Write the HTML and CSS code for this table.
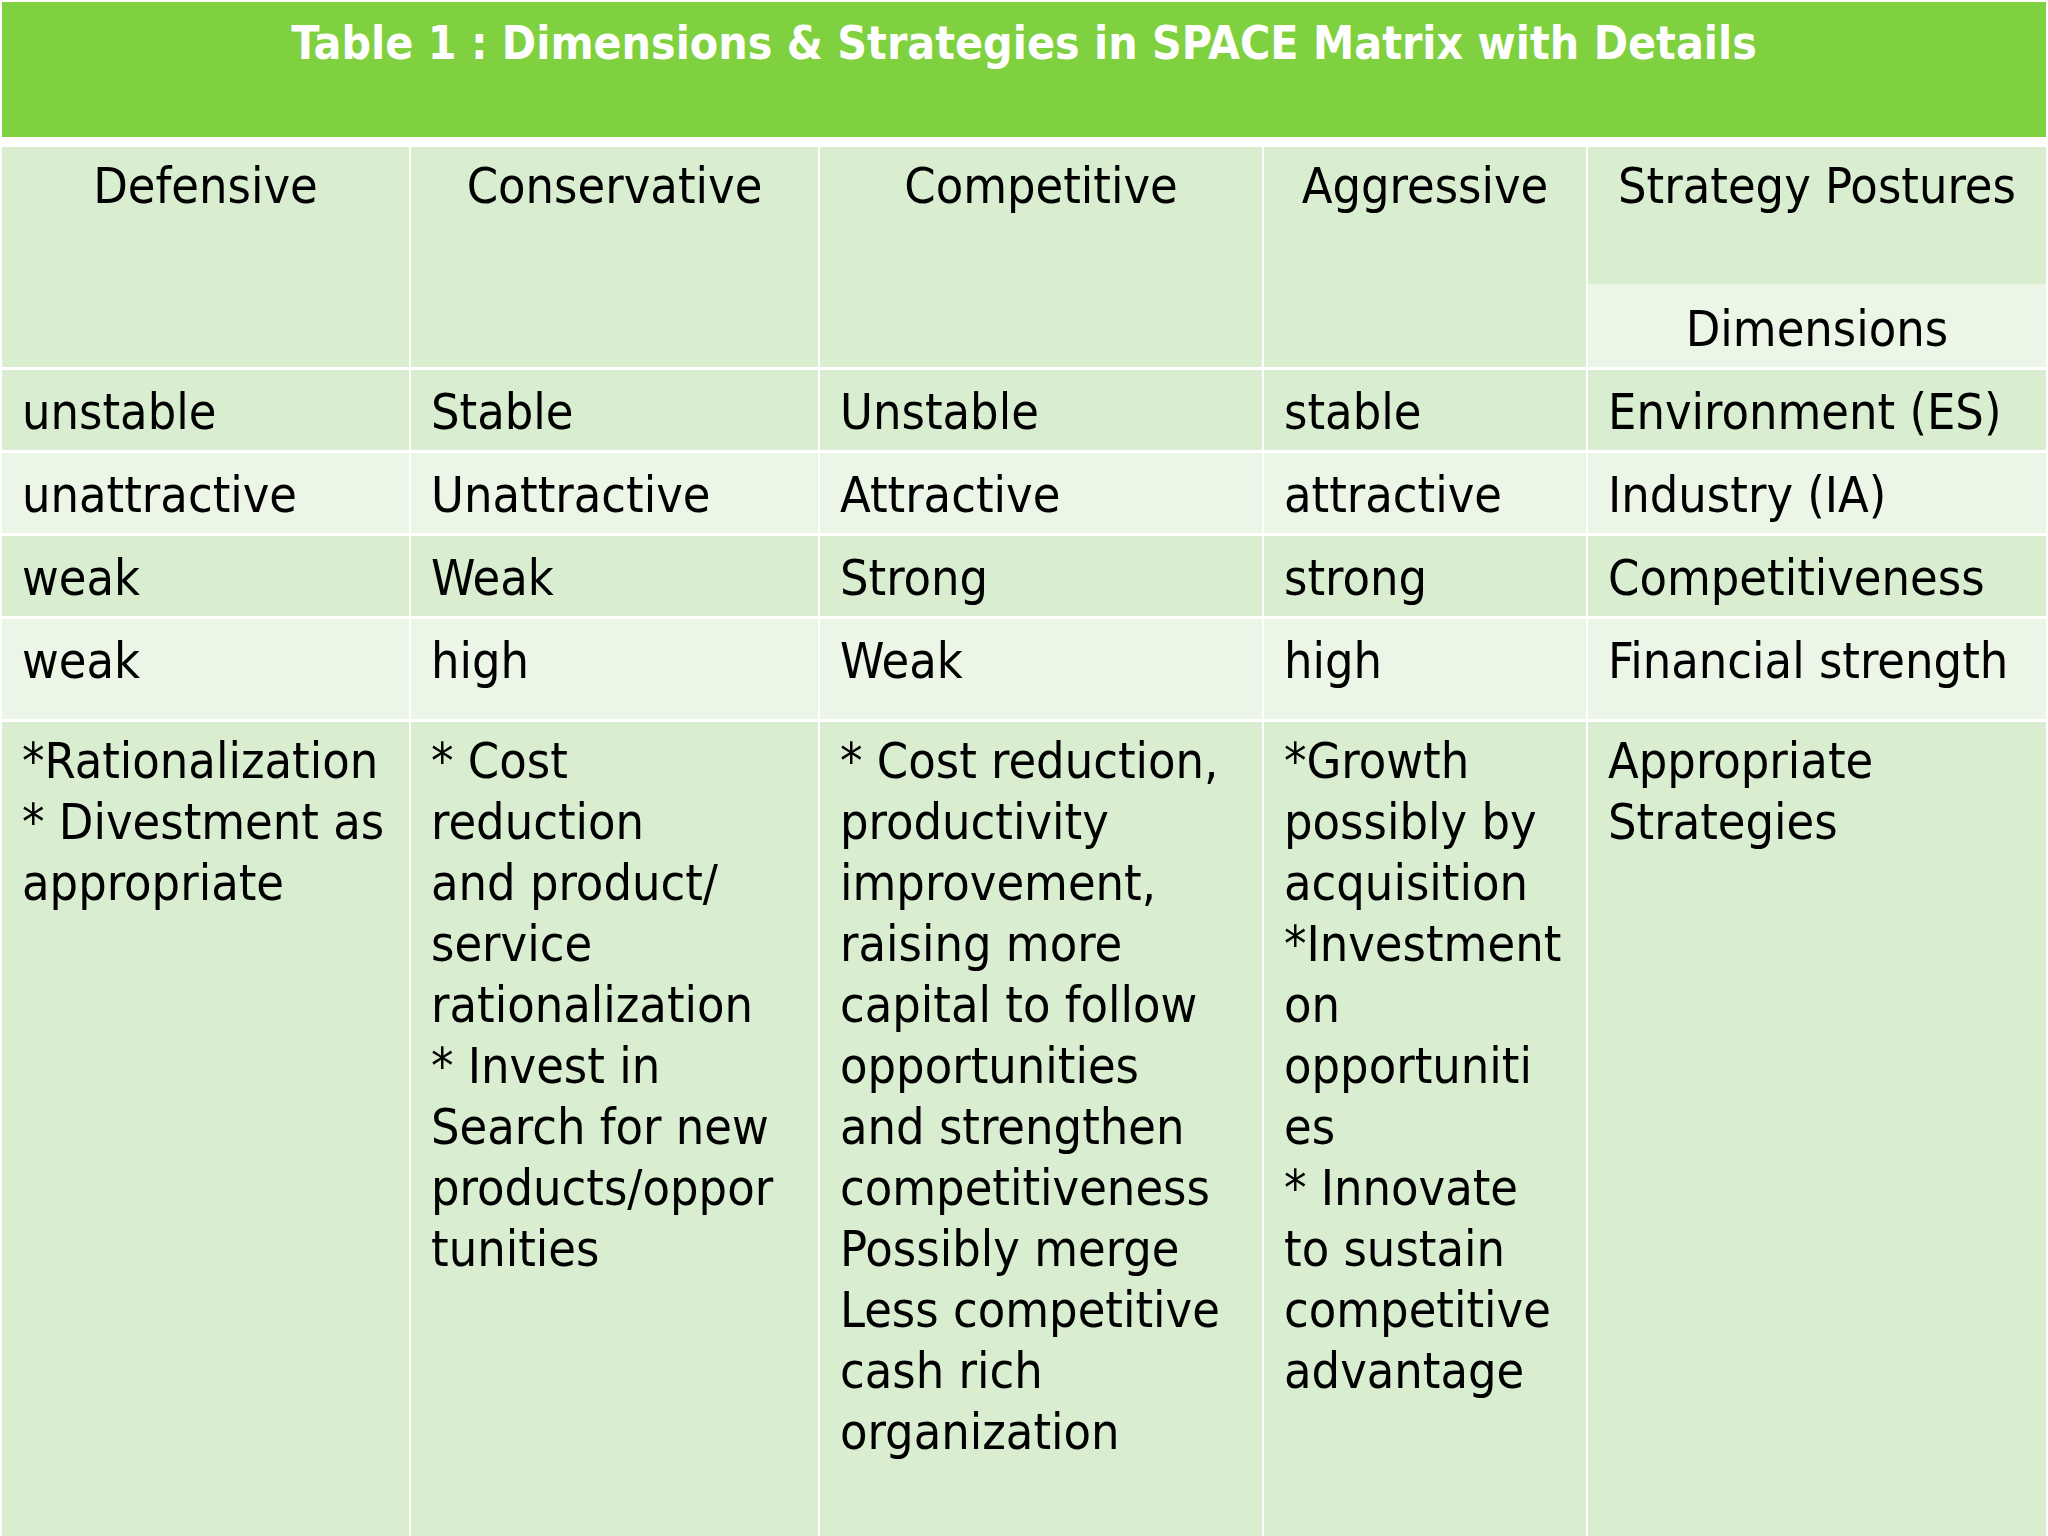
FILE: index.html
```html
<!DOCTYPE html>
<html>
<head>
<meta charset="utf-8">
<link rel="stylesheet" href="styles.css">
</head>
<body>
<div class="page">
  <div class="title">Table 1 : Dimensions &amp; Strategies in SPACE Matrix with Details</div>
  <div class="grid">
    <div class="cell head c1">Defensive</div>
    <div class="cell head c2">Conservative</div>
    <div class="cell head c3">Competitive</div>
    <div class="cell head c4">Aggressive</div>
    <div class="cell headsplit c5">
      <div class="sp-top">Strategy Postures</div>
      <div class="sp-bot">Dimensions</div>
    </div>

    <div class="cell dark">unstable</div>
    <div class="cell dark">Stable</div>
    <div class="cell dark">Unstable</div>
    <div class="cell dark">stable</div>
    <div class="cell dark">Environment (ES)</div>

    <div class="cell light">unattractive</div>
    <div class="cell light">Unattractive</div>
    <div class="cell light">Attractive</div>
    <div class="cell light">attractive</div>
    <div class="cell light">Industry (IA)</div>

    <div class="cell dark">weak</div>
    <div class="cell dark">Weak</div>
    <div class="cell dark">Strong</div>
    <div class="cell dark">strong</div>
    <div class="cell dark">Competitiveness</div>

    <div class="cell light">weak</div>
    <div class="cell light">high</div>
    <div class="cell light">Weak</div>
    <div class="cell light">high</div>
    <div class="cell light">Financial strength</div>

    <div class="cell dark strat">*Rationalization<br>* Divestment as<br>appropriate</div>
    <div class="cell dark strat">* Cost<br>reduction<br>and product/<br>service<br>rationalization<br>* Invest in<br>Search for new<br>products/oppor<br>tunities</div>
    <div class="cell dark strat">* Cost reduction,<br>productivity<br>improvement,<br>raising more<br>capital to follow<br>opportunities<br>and strengthen<br>competitiveness<br>Possibly merge<br>Less competitive<br>cash rich<br>organization</div>
    <div class="cell dark strat">*Growth<br>possibly by<br>acquisition<br>*Investment<br>on<br>opportuniti<br>es<br>* Innovate<br>to sustain<br>competitive<br>advantage</div>
    <div class="cell dark strat">Appropriate<br>Strategies</div>
  </div>
</div>
</body>
</html>
```

FILE: styles.css
```css
html, body {
  margin: 0;
  padding: 0;
  background: #ffffff;
}

.page {
  width: 2048px;
  height: 1536px;
  overflow: hidden;
  display: flex;
  flex-direction: column;
  font-family: "DejaVu Sans", "Liberation Sans", sans-serif;
  font-stretch: condensed;
  color: #000000;
}

.title {
  margin-top: 2px;
  height: 135px;
  background: #80d13f;
  color: #ffffff;
  font-weight: bold;
  font-size: 46px;
  line-height: 56px;
  text-align: center;
  padding-top: 13px;
  box-sizing: border-box;
  margin-left: 2px;
  margin-right: 2px;
}

.grid {
  margin-top: 10px;
  flex: 1;
  display: grid;
  grid-template-columns: 407px 407px 442px 322px 1fr;
  grid-template-rows: 220px 80px 80px 80px 100px 1fr;
  column-gap: 2px;
  row-gap: 3px;
  padding: 0 2px 0 2px;
}

.cell {
  font-size: 50px;
  line-height: 61px;
  padding: 12px 0 0 20px;
  white-space: nowrap;
  box-sizing: border-box;
  overflow: hidden;
}

.head {
  background: #d9eed0;
  text-align: center;
  padding-left: 0;
  padding-top: 9px;
}

.headsplit {
  padding: 0;
  display: flex;
  flex-direction: column;
  text-align: center;
}

.sp-top {
  height: 137px;
  background: #d9eed0;
  padding-top: 9px;
  box-sizing: border-box;
}

.sp-bot {
  flex: 1;
  background: #ebf6e7;
  padding-top: 15px;
  box-sizing: border-box;
}

.dark {
  background: #d9eed0;
}

.light {
  background: #ebf6e7;
}

.strat {
  padding-top: 9px;
}
```
